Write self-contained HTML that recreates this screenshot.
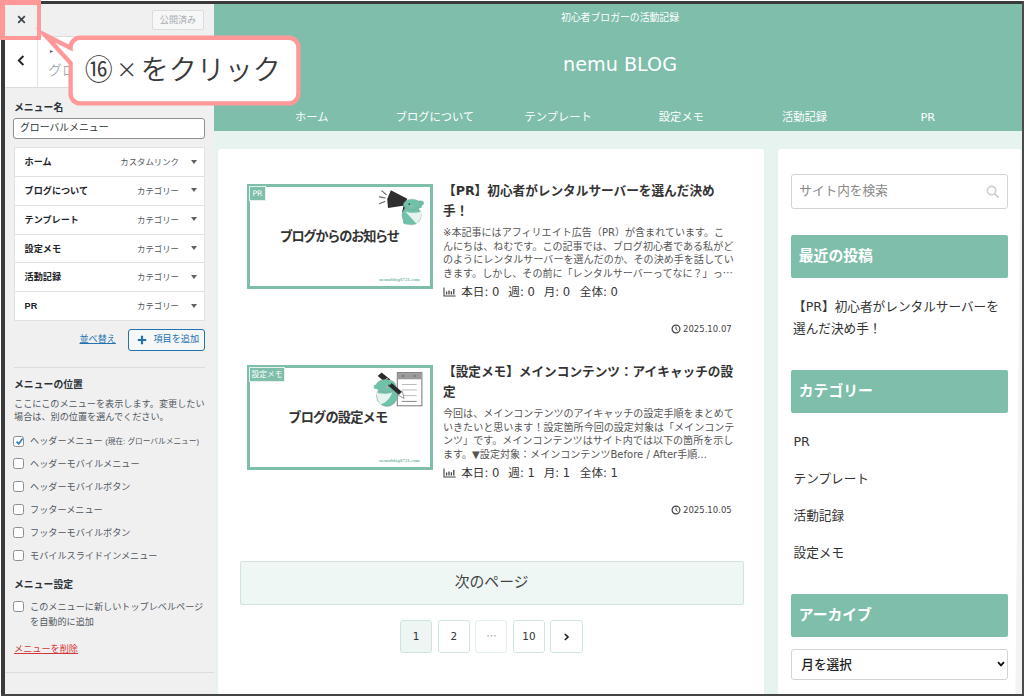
<!DOCTYPE html>
<html lang="ja">
<head>
<meta charset="utf-8">
<title>nemu BLOG カスタマイズ</title>
<style>
*{box-sizing:border-box;margin:0;padding:0}
html,body{width:1024px;height:696px;overflow:hidden;background:#fff}
body{font-family:"Liberation Sans","Noto Sans CJK JP",sans-serif;color:#3c434a}
.abs{position:absolute}
#stage{position:absolute;left:0;top:0;width:1024px;height:696px;overflow:hidden;background:#fff}
.t{position:absolute;white-space:nowrap;line-height:1}
/* frame */
#frame{position:absolute;left:1px;top:1px;width:1026px;height:698px;border-style:solid;border-color:#3a3a3a;border-width:3px 0 0 4px;pointer-events:none;z-index:50}
#frameR{position:absolute;left:1022.4px;top:1px;width:1.6px;height:695px;background:#4a4a4a;z-index:50}
#frameB{position:absolute;left:1px;top:694px;width:1023px;height:2px;background:#444;z-index:50}
/* ---------- customizer panel ---------- */
#panel{position:absolute;left:5px;top:4px;width:209px;height:690px;background:#f0f0f1;font-family:"Liberation Sans","Noto Sans CJK JP",sans-serif}
#ptop{position:absolute;left:0;top:0;width:209px;height:33px;background:#f0f0f1;border-bottom:1px solid #dcdcde}
#prow{position:absolute;left:0;top:33px;width:209px;height:51px;background:#fff;border-bottom:1px solid #dcdcde}
#pback{position:absolute;left:0;top:0;width:33px;height:50px;border-right:1px solid #e2e2e4}
.btn-pub{position:absolute;left:147px;top:6.3px;width:52px;height:20.2px;border:1px solid #dcdcde;border-radius:2px;background:#f6f7f7;color:#a7aaad;font-size:9.1px;line-height:18.2px;text-align:center}
.lbl{font-weight:700;color:#2c3338;font-size:9.85px}
.inp{position:absolute;left:8px;top:114.4px;width:192px;height:20.4px;border:1px solid #8c8f94;border-radius:3px;background:#fff;font-size:9.85px;line-height:18px;padding-left:6px;color:#2c3338}
.mi{position:absolute;left:8.6px;width:191.4px;height:29.8px;background:#fff;border:1px solid #e0e1e3}
.mi b{position:absolute;left:10px;top:0;line-height:28px;font-size:9.1px;color:#1d2327;font-weight:700}
.mi span{position:absolute;right:25px;top:0;line-height:28px;font-size:8.4px;color:#50575e}
.mi i{position:absolute;right:7.4px;top:11.4px;width:0;height:0;border-left:3.1px solid transparent;border-right:3.1px solid transparent;border-top:4.6px solid #5a6168}
.cb{position:absolute;left:8px;width:11px;height:11px;border:1px solid #8c8f94;border-radius:2.5px;background:#fff}
.cl{position:absolute;left:25px;font-size:9.14px;color:#50575e;white-space:nowrap;line-height:12px}
/* ---------- preview ---------- */
#pv{position:absolute;left:214px;top:4px;width:812px;height:690px;background:#e7f3ef;font-family:"DejaVu Sans","Noto Sans CJK JP",sans-serif;color:#333;overflow:hidden}
#hd{position:absolute;left:0;top:0;width:812px;height:127px;background:#7ebeab}
#hd .t{color:#fff}
.card{position:absolute;background:#fff;border-radius:3px}

.nv{top:107.6px;width:123.2px;text-align:center;font-size:11.25px}
.thumb{position:absolute;width:185.8px;height:104.6px;border:3px solid #7ebeab;background:#fff}
.thumb .cat{position:absolute;left:-1.3px;top:-0.7px;height:14.5px;background:#7ebeab;color:#fff;font-size:7.7px;line-height:13.2px;text-align:center;white-space:nowrap;border:0.8px solid #e4f1ed}
.thumb .ttl{left:-1px;width:179.8px;text-align:center;font-size:13.2px;font-weight:700;color:#333;letter-spacing:-1.25px}
.thumb .url{right:10.4px;top:90.6px;font-size:4.9px;color:#7ebeab;font-weight:700;font-family:"Liberation Serif",serif}
.et{position:absolute;left:224.7px;width:300px;font-size:12.65px;line-height:20.2px;font-weight:700;color:#333;white-space:nowrap}
.es{position:absolute;left:224.7px;width:300px;font-size:10.05px;line-height:13.75px;color:#555;white-space:nowrap}
.st{font-size:11.6px;color:#333}
.dt{right:32.6px;font-size:8.5px;color:#444}
.pg{position:absolute;top:471.7px;width:32.3px;height:32.3px;border:1px solid #cfe6de;border-radius:3px;background:#fff;text-align:center;font-size:10.4px;line-height:30.3px;color:#333}
.pg.cur{background:#edf6f3}
.pg.dots{border-color:#e3f0ec;color:#999}
.wt{position:absolute;left:13.3px;width:216.5px;height:42.6px;background:#7ebeab;border-radius:2px;color:#fff;font-weight:700;font-size:14.8px;line-height:42px;padding-left:7.5px;white-space:nowrap}
.sl{left:15.5px;font-size:12.65px;color:#333}
.el{font-family:"Noto Sans CJK JP",sans-serif;line-height:0}
</style>
</head>
<body>
<div id="stage">

<!-- ================= CUSTOMIZER PANEL ================= -->
<div id="panel">
  <div id="ptop">
    <svg class="abs" style="left:12.2px;top:11.1px" width="9" height="9" viewBox="0 0 9 9"><path d="M1.2 1.2 L7.8 7.8 M7.8 1.2 L1.2 7.8" stroke="#3c434a" stroke-width="1.7" fill="none"/></svg>
    <div class="btn-pub">公開済み</div>
  </div>
  <div id="prow">
    <div id="pback"><svg class="abs" style="left:12px;top:18px" width="8" height="11" viewBox="0 0 8 11"><path d="M6.4 1 L1.8 5.5 L6.4 10" stroke="#1d2327" stroke-width="1.9" fill="none"/></svg></div>
    <div class="t" style="left:44.6px;top:11.2px;font-size:6.4px;color:#50575e">▸</div>
    <div class="t" style="left:43px;top:25.8px;font-size:14px;color:#8c9aa3;font-weight:300">グローバルメニュー</div>
  </div>
  <div class="t lbl" style="left:9px;top:98.5px">メニュー名</div>
  <div class="inp">グローバルメニュー</div>

  <div class="mi" style="top:143.2px"><b>ホーム</b><span>カスタムリンク</span><i></i></div>
  <div class="mi" style="top:172px"><b>ブログについて</b><span>カテゴリー</span><i></i></div>
  <div class="mi" style="top:200.8px"><b>テンプレート</b><span>カテゴリー</span><i></i></div>
  <div class="mi" style="top:229.6px"><b>設定メモ</b><span>カテゴリー</span><i></i></div>
  <div class="mi" style="top:258.4px"><b>活動記録</b><span>カテゴリー</span><i></i></div>
  <div class="mi" style="top:287.2px"><b>PR</b><span>カテゴリー</span><i></i></div>

  <div class="t" style="left:74.5px;top:331px;font-size:9.1px;color:#2271b1;text-decoration:underline">並べ替え</div>
  <div class="abs" style="left:122.5px;top:325px;width:77.5px;height:22px;border:1px solid #2271b1;border-radius:3px;background:#f6f7f7">
    <svg class="abs" style="left:8px;top:5px" width="10" height="10" viewBox="0 0 10 10"><path d="M5 0.8V9.2M0.8 5H9.2" stroke="#2271b1" stroke-width="2.2" fill="none"/></svg>
    <div class="t" style="left:25px;top:5px;font-size:9.1px;color:#2271b1">項目を追加</div>
  </div>

  <div class="abs" style="left:9px;top:363px;width:191px;height:1px;background:#dcdcde"></div>
  <div class="t lbl" style="left:9px;top:376px">メニューの位置</div>
  <div class="abs" style="left:9px;top:394px;width:195px;font-size:9.14px;line-height:12.7px;color:#50575e">ここにこのメニューを表示します。変更したい<br>場合は、別の位置を選んでください。</div>

  <div class="cb" style="top:431.7px"><svg class="abs" style="left:0.5px;top:0.5px" width="9" height="9" viewBox="0 0 9 9"><path d="M1.6 4.6 L3.7 6.9 L7.6 1.6" stroke="#3582c4" stroke-width="1.7" fill="none"/></svg></div>
  <div class="cl" style="top:431.2px">ヘッダーメニュー <span style="font-size:7.7px">(現在: グローバルメニュー)</span></div>
  <div class="cb" style="top:454.4px"></div><div class="cl" style="top:453.9px">ヘッダーモバイルメニュー</div>
  <div class="cb" style="top:477.4px"></div><div class="cl" style="top:476.9px">ヘッダーモバイルボタン</div>
  <div class="cb" style="top:500.2px"></div><div class="cl" style="top:499.7px">フッターメニュー</div>
  <div class="cb" style="top:523.2px"></div><div class="cl" style="top:522.7px">フッターモバイルボタン</div>
  <div class="cb" style="top:546.2px"></div><div class="cl" style="top:545.7px">モバイルスライドインメニュー</div>

  <div class="t lbl" style="left:9px;top:575.5px">メニュー設定</div>
  <div class="cb" style="top:597.4px"></div>
  <div class="cl" style="top:595.6px;line-height:15.8px">このメニューに新しいトップレベルページ<br>を自動的に追加</div>
  <div class="t" style="left:9px;top:641px;font-size:9.14px;color:#d63638;text-decoration:underline">メニューを削除</div>
  <div class="abs" style="left:0;top:667.5px;width:209px;height:1px;background:#dcdcde"></div>
</div>

<!-- ================= PREVIEW ================= -->
<div id="pv">
  <div id="hd">
    <div class="t" style="left:0;width:812px;text-align:center;top:8.5px;font-size:9.85px">初心者ブロガーの活動記録</div>
    <div class="t" style="left:0;width:812px;text-align:center;top:50.5px;font-size:19.2px">nemu BLOG</div>
    <div class="t nv" style="left:36.1px">ホーム</div>
    <div class="t nv" style="left:159.3px">ブログについて</div>
    <div class="t nv" style="left:282.5px">テンプレート</div>
    <div class="t nv" style="left:405.7px">設定メモ</div>
    <div class="t nv" style="left:528.9px">活動記録</div>
    <div class="t nv" style="left:652.1px">PR</div>
  </div>

  <!-- main card -->
  <div class="card" id="main" style="left:4.3px;top:144.8px;width:546px;height:560px">
    <!-- entry 1 -->
    <div class="thumb" style="left:29px;top:35.2px">
      <svg class="abs" style="left:0;top:0" width="179.8" height="98.6" viewBox="250.3 187 179.8 98.6">
        <g stroke="#666" stroke-width="1.1" stroke-linecap="round"><path d="M382.2 190.8L386.5 194.7M379.7 196.9L385.5 198M379.7 203.7L385.1 201.6"/></g>
        <path d="M391.2 190.2L407.6 198.8L405 205.4L388.3 207.9L387.5 199Z" fill="#2e2e2e"/>
        <path d="M405.3 205.5L403.6 212.6" stroke="#2e2e2e" stroke-width="2.6"/>
        <ellipse cx="420.6" cy="203.2" rx="3.4" ry="2.4" fill="#6fc1a9" stroke="#8a9a95" stroke-width="0.4"/>
        <ellipse cx="419.2" cy="206.2" rx="3" ry="2" fill="#6fc1a9"/>
        <circle cx="411.9" cy="215.2" r="9.6" fill="#6fc1a9" stroke="#8a9a95" stroke-width="0.5"/>
        <path d="M405.6 211.6C410 213.4 417 213.2 421.2 211.4C422.4 216 420.4 221.2 416.6 223.4Z" fill="#e6f4ee"/>
        <ellipse cx="412.4" cy="204.6" rx="8.6" ry="5.4" fill="#6fc1a9" stroke="#8a9a95" stroke-width="0.4"/>
        <ellipse cx="407.4" cy="221.6" rx="4.2" ry="3" fill="#6fc1a9"/>
        <circle cx="409.6" cy="204.1" r="0.9" fill="#2d3b4e"/>
        <circle cx="411.8" cy="206.3" r="0.9" fill="#f0a090"/>
      </svg>
      <div class="cat" style="width:16.9px">PR</div>
      <div class="t ttl" style="top:42.8px">ブログからのお知らせ</div>
      <div class="t url">nemublog0721.com</div>
    </div>
    <div class="et" style="top:32px">【PR】初心者がレンタルサーバーを選んだ決め<br>手！</div>
    <div class="es" style="top:77px">※本記事にはアフィリエイト広告（PR）が含まれています。こ<br>んにちは、ねむです。この記事では、ブログ初心者である私がど<br>のようにレンタルサーバーを選んだのか、その決め手を話してい<br>きます。しかし、その前に「レンタルサーバーってなに？」っ<span class="el">…</span></div>
    <svg class="abs" style="left:225.2px;top:138.1px" width="13" height="10" viewBox="0 0 13 10"><path d="M1 0.5V9H12.6" stroke="#444" stroke-width="1.1" fill="none"/><path d="M3.6 7.4V4.6M6 7.4V3.4M8.4 7.4V4.2M10.8 7.4V2" stroke="#444" stroke-width="1.3" fill="none"/></svg><div class="t st" style="left:242.9px;top:138.6px">本日: 0</div><div class="t st" style="left:290.0px;top:138.6px">週: 0</div><div class="t st" style="left:325.4px;top:138.6px">月: 0</div><div class="t st" style="left:361.5px;top:138.6px">全体: 0</div>
    <svg class="abs" style="left:452.4px;top:175.5px" width="10" height="10" viewBox="0 0 10 10"><circle cx="5" cy="5" r="3.9" stroke="#444" stroke-width="1.2" fill="none"/><path d="M5 2.6V5.2L6.5 6.4" stroke="#444" stroke-width="1" fill="none"/></svg><div class="t dt" style="top:176.1px">2025.10.07</div>
    <!-- entry 2 -->
    <div class="thumb" style="left:29px;top:216.2px">
      <svg class="abs" style="left:0;top:0" width="179.8" height="98.6" viewBox="250.3 368 179.8 98.6">
        <rect x="397.6" y="372.6" width="24.6" height="33.2" fill="#fff" stroke="#777" stroke-width="1"/>
        <rect x="398.1" y="373.1" width="23.6" height="6.2" fill="#9a9a9a"/>
        <circle cx="403.5" cy="375.9" r="0.9" fill="#666"/><circle cx="415" cy="375.9" r="0.9" fill="#666"/>
        <path d="M402 384.5H417M402 390H417M402 395.6H417" stroke="#aaa" stroke-width="0.8"/>
        <path d="M402 401.4H417" stroke="#777" stroke-width="0.9"/>
        <path d="M378 375.9L381.9 372.4L390.6 379.4L386.8 383.2Z" fill="#2a2a2a"/><path d="M384.2 381.6L388 377.8" stroke="#fff" stroke-width="1"/>
        <circle cx="387.3" cy="396" r="10.4" fill="#6fc1a9" stroke="#8a9a95" stroke-width="0.5"/>
        <path d="M377.4 392.6C381 394.2 388 394.2 392.4 392.4C390.6 398.4 385.6 403.4 380.6 404.2C378 401.2 376.8 396.6 377.4 392.6Z" fill="#e6f4ee"/>
        <ellipse cx="386.2" cy="385.8" rx="10" ry="6.4" fill="#6fc1a9" stroke="#8a9a95" stroke-width="0.4"/>
        <ellipse cx="377.2" cy="386.8" rx="3.2" ry="2.4" fill="#6fc1a9"/>
        <path d="M390.6 384.6L400.8 393.4" stroke="#2a2a2a" stroke-width="4.2"/>
        <path d="M398.6 395.2L402.6 391.4L404.4 398.6Z" fill="#fff" stroke="#555" stroke-width="0.6"/>
        <circle cx="389.3" cy="385.3" r="0.9" fill="#2d3b4e"/>
        <circle cx="387.4" cy="387.5" r="0.9" fill="#f0a090"/>
      </svg>
      <div class="cat" style="width:35.9px">設定メモ</div>
      <div class="t ttl" style="top:43.4px;letter-spacing:-0.8px;left:-2.4px">ブログの設定メモ</div>
      <div class="t url">nemublog0721.com</div>
    </div>
    <div class="et" style="top:213px">【設定メモ】メインコンテンツ：アイキャッチの設<br>定</div>
    <div class="es" style="top:258px">今回は、メインコンテンツのアイキャッチの設定手順をまとめて<br>いきたいと思います！設定箇所今回の設定対象は「メインコンテ<br>ンツ」です。メインコンテンツはサイト内では以下の箇所を示し<br>ます。▼設定対象：メインコンテンツBefore / After手順...</div>
    <svg class="abs" style="left:225.2px;top:319.1px" width="13" height="10" viewBox="0 0 13 10"><path d="M1 0.5V9H12.6" stroke="#444" stroke-width="1.1" fill="none"/><path d="M3.6 7.4V4.6M6 7.4V3.4M8.4 7.4V4.2M10.8 7.4V2" stroke="#444" stroke-width="1.3" fill="none"/></svg><div class="t st" style="left:242.9px;top:319.6px">本日: 0</div><div class="t st" style="left:290.0px;top:319.6px">週: 1</div><div class="t st" style="left:325.4px;top:319.6px">月: 1</div><div class="t st" style="left:361.5px;top:319.6px">全体: 1</div>
    <svg class="abs" style="left:452.4px;top:356.5px" width="10" height="10" viewBox="0 0 10 10"><circle cx="5" cy="5" r="3.9" stroke="#444" stroke-width="1.2" fill="none"/><path d="M5 2.6V5.2L6.5 6.4" stroke="#444" stroke-width="1" fill="none"/></svg><div class="t dt" style="top:357.1px">2025.10.05</div>

    <!-- next page -->
    <div class="abs" style="left:21.3px;top:412.6px;width:504px;height:43.6px;background:#eff7f4;border:1px solid #cfe6de;border-radius:2px;text-align:center;font-size:14.8px;line-height:40.6px;color:#444">次のページ</div>
    <div class="pg cur" style="left:181.7px">1</div>
    <div class="pg" style="left:219.3px">2</div>
    <div class="pg dots" style="left:256.9px;font-family:'Noto Sans CJK JP',sans-serif">…</div>
    <div class="pg" style="left:294.5px">10</div>
    <div class="pg" style="left:332.1px"><svg class="abs" style="left:12px;top:11.5px" width="7" height="8" viewBox="0 0 7 8"><path d="M1.8 1 L5 4 L1.8 7" stroke="#222" stroke-width="1.7" fill="none"/></svg></div>
  </div>

  <!-- sidebar card -->
  <div class="card" id="side" style="left:564px;top:144.8px;width:243px;height:560px">
    <div class="abs" style="left:13.3px;top:25.6px;width:216.5px;height:34.4px;border:1px solid #d4d4d4;border-radius:3px">
      <div class="t" style="left:7px;top:10px;font-size:12.65px;color:#888">サイト内を検索</div>
      <svg class="abs" style="left:194px;top:9.6px" width="14" height="14" viewBox="0 0 14 14"><circle cx="5.6" cy="5.6" r="4.2" stroke="#cfcfcf" stroke-width="1.6" fill="none"/><path d="M8.8 8.8 L12.6 12.6" stroke="#cfcfcf" stroke-width="1.9"/></svg>
    </div>
    <div class="wt" style="top:86.2px">最近の投稿</div>
    <div class="abs" style="left:15px;top:147px;width:220px;font-size:12.65px;line-height:22px;color:#333">【PR】初心者がレンタルサーバーを<br>選んだ決め手！</div>
    <div class="wt" style="top:221.7px">カテゴリー</div>
    <div class="t sl" style="top:287.5px">PR</div>
    <div class="t sl" style="top:324.3px">テンプレート</div>
    <div class="t sl" style="top:361.1px">活動記録</div>
    <div class="t sl" style="top:397.9px">設定メモ</div>
    <div class="wt" style="top:445.7px">アーカイブ</div>
    <div class="abs" style="left:13.3px;top:500px;width:216.5px;height:31px;border:1px solid #d4d4d4;border-radius:3px">
      <div class="t" style="left:9px;top:9px;font-size:12.65px;color:#222;font-weight:500">月を選択</div>
      <svg class="abs" style="left:205px;top:11.4px" width="8" height="6" viewBox="0 0 8 6"><path d="M1 1.2 L4 4.4 L7 1.2" stroke="#111" stroke-width="1.8" fill="none"/></svg>
    </div>
  </div>
</div>

<!-- ================= ANNOTATION ================= -->
<div id="frame"></div>
<div class="abs" style="left:0;top:0;width:41.2px;height:39.8px;border:4.8px solid #ff9999;border-left-width:5.3px;border-top-width:5px;z-index:60"></div>
<svg class="abs" style="left:0;top:0;z-index:61" width="320" height="120" viewBox="0 0 320 120">
  <path d="M80.2 37.8 H288.8 A9.6 9.6 0 0 1 298.4 47.4 V93.8 A9.6 9.6 0 0 1 288.8 103.4 H80.2 A9.6 9.6 0 0 1 70.6 93.8 V63 L45 35 L70.6 48.0 V47.4 A9.6 9.6 0 0 1 80.2 37.8 Z" fill="#fff" stroke="#ff9999" stroke-width="4.4" stroke-linejoin="miter" stroke-miterlimit="30"/>
  <text x="84.7" y="79.5" font-family="'Noto Sans CJK JP','Liberation Sans',sans-serif" font-weight="350" font-size="28" fill="#3a3a3a"><tspan x="84.7" y="79.5">⑯</tspan><tspan x="116.2" y="76.7" font-size="21">×</tspan><tspan x="140.7" y="79.5">をクリック</tspan></text>
</svg>
<div class="abs" style="left:1015px;top:152px;width:7px;height:542px;background:#f4f3f3;z-index:40;clip-path:polygon(5.5px 0,7px 0,7px 100%,0.4px 100%)"></div><div id="frameR"></div><div id="frameB"></div>
</div>
</body>
</html>
